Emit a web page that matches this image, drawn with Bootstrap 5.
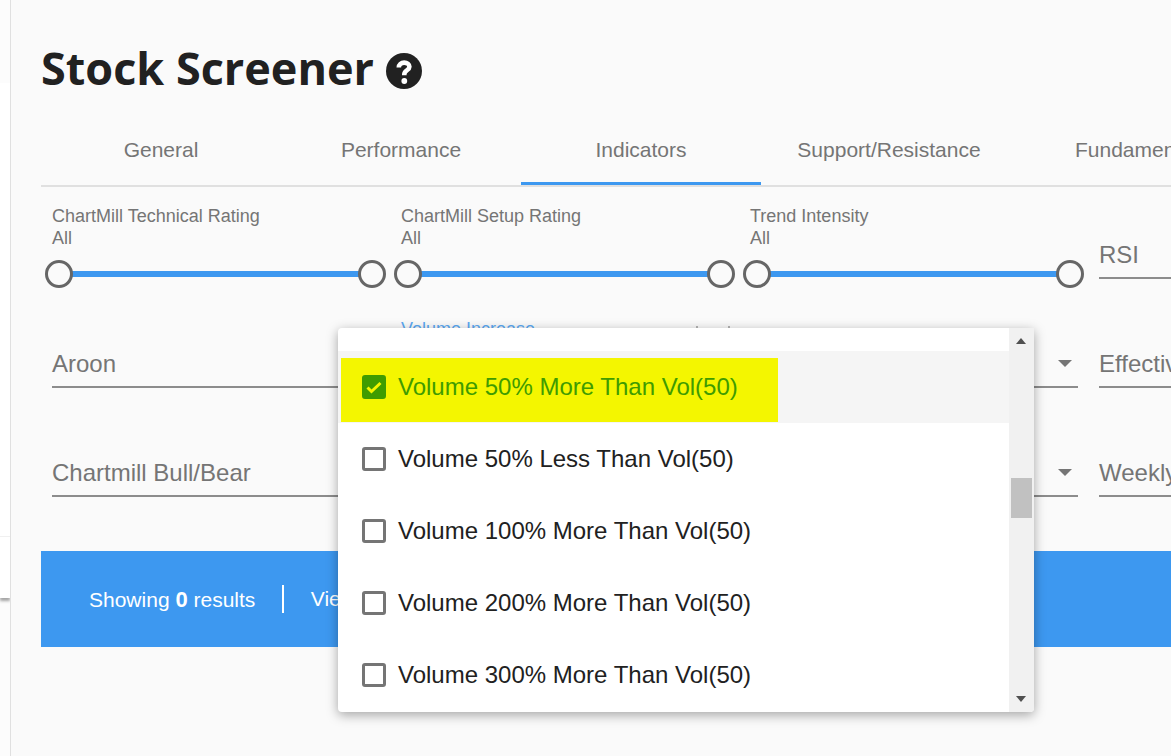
<!DOCTYPE html>
<html><head><meta charset="utf-8">
<link href="https://cdn.jsdelivr.net/npm/bootstrap@5.3.0/dist/css/bootstrap.min.css" rel="stylesheet">
<style>
html,body{height:756px;overflow:hidden;background:#fff;font-family:"Liberation Sans",Arial,sans-serif}
.shell{width:1171px;height:756px;position:relative;overflow:hidden}
.sidestrip{width:10px;flex:none;padding-top:83px;background:#fcfcfc}
.sidecard{height:453px;background:#fff}
.sidecard2{height:62px;background:#fff;border-top:1px solid #f0f0f0;box-shadow:0 3px 3px rgba(0,0,0,.35)}
.mainp{flex:none;width:1400px;height:756px;background:#fafafa;border-left:1px solid #e0e0e0;padding:41px 0 0 30px}
.pagetitle{font-family:"Open Sans",sans-serif;font-weight:700;font-size:45px;line-height:54px;color:#212121;margin:0;height:54px;display:flex;align-items:center;gap:12px}
.pagetitle svg{margin-top:5px}
.tabstrip{margin-top:24px;height:68px;width:1360px;border-bottom:2px solid #e0e0e0;display:flex}
.tabitem{width:240px;height:66px;flex:none;text-align:center;font-size:21px;line-height:62px;color:#757575}
.tabitem.wide{width:256px}
.tabitem.wide2{width:240px;text-align:left;padding-left:58px}
.tabitem.on{border-bottom:3px solid #3d98f0}
.filtergrid{display:grid;grid-template-columns:repeat(4,349px);width:1396px}
.slidecell{height:154px;padding:18px 11px 0 11px}
.slabel{font-size:18px;line-height:22px;color:#757575}
.track{height:6px;background:#3d98f0;margin:22px 7.500px 0 7px;position:relative}
.knob{position:absolute;width:28px;height:28px;top:-11px;border-radius:50%;background:#fafafa;border:3px solid #666}
.knob.a{left:-14px}.knob.b{right:-14px}
.selcell{height:109px;padding:0 11px}
.selcell.lastrow{height:101px}
.selbox{height:47px;border-bottom:2px solid #8c8c8c;font-size:24px;line-height:44px;color:#757575;display:flex;justify-content:space-between;align-items:center;width:328px;white-space:nowrap}
.caretd{width:0;height:0;border-left:7.5px solid transparent;border-right:7.5px solid transparent;border-top:7.5px solid #757575;margin-right:6px}
.rsiwrap{padding-top:45px;height:154px}
.resultbar{height:96px;width:1360px;background:#3d98f0;color:#fff;font-size:21px;display:flex;align-items:center;padding-left:48px}
.resultbar b{font-size:22px}
.vsep{width:2.5px;height:28px;background:#fff;margin:0 26.5px}
.dropmenu{position:absolute;left:338px;top:328px;width:696px;height:384px;background:#fff;border-radius:4px 0 4px 4px;box-shadow:0 3px 12px rgba(0,0,0,.35);overflow:hidden;display:flex}
.optlist{width:671px;padding-top:23px}
.optrow{height:72px;display:flex;align-items:center;padding-left:24px;gap:12px;font-size:24px;color:#212121;position:relative;white-space:nowrap}
.optrow.hov{background:#f5f5f5}
.hilite{position:absolute;left:3px;top:7px;width:437px;height:64px;background:#f4f600}
.cbx{width:24px;height:24px;border:3px solid #757575;border-radius:3px;flex:none;position:relative;display:block}
.cbx.tick{background:#3f9c00;border-color:#3f9c00}
.txt{position:relative}
.optrow.hov .txt{color:#3f9c00}
.sbar{width:25px;background:#f1f1f1;position:relative}
.sthumb{position:absolute;left:2px;top:150px;width:21px;height:40px;background:#c1c1c1}
.arr{position:absolute;left:7px;width:0;height:0;border-left:5.5px solid transparent;border-right:5.5px solid transparent}
.arr.u{top:10px;border-bottom:6px solid #505050}
.arr.d{bottom:10px;border-top:6px solid #505050}
.behind{position:absolute;left:401px;top:318px;font-size:18px;color:#5aa8f2;line-height:22px}
.tipmark{position:absolute;top:326px;width:2px;height:2px;background:#b5b5b5}
.tipa{left:696px}.tipb{left:728px}
</style></head>
<body>
<div class="shell d-flex">
  <div class="sidestrip"><div class="sidecard"></div><div class="sidecard2"></div></div>
  <main class="mainp">
    <h1 class="pagetitle">Stock Screener
      <svg width="36" height="36" viewBox="0 0 36 36" aria-hidden="true"><circle cx="18" cy="18" r="18" fill="#212121"/><path d="M12.800 14.600C12.800 11.400 15.200 9.600 18.200 9.600c3 0 5.200 1.700 5.200 4.200 0 3.500-5.100 3.500-5.100 7.500v1" fill="none" stroke="#fff" stroke-width="4.600"/><circle cx="18.300" cy="28" r="2.900" fill="#fff"/></svg>
    </h1>
    <div class="tabstrip">
      <div class="tabitem">General</div>
      <div class="tabitem">Performance</div>
      <div class="tabitem on">Indicators</div>
      <div class="tabitem wide">Support/Resistance</div>
      <div class="tabitem wide2">Fundamentals</div>
    </div>
    <div class="filtergrid">
      <div class="slidecell"><div class="slabel">ChartMill Technical Rating</div><div class="slabel">All</div><div class="track"><span class="knob a"></span><span class="knob b"></span></div></div>
      <div class="slidecell"><div class="slabel">ChartMill Setup Rating</div><div class="slabel">All</div><div class="track"><span class="knob a"></span><span class="knob b"></span></div></div>
      <div class="slidecell"><div class="slabel">Trend Intensity</div><div class="slabel">All</div><div class="track"><span class="knob a"></span><span class="knob b"></span></div></div>
      <div class="selcell rsiwrap"><div class="selbox">RSI</div></div>
      <div class="selcell"><div class="selbox">Aroon</div></div>
      <div class="selcell"><div class="selbox"></div></div>
      <div class="selcell"><div class="selbox"><span></span><span class="caretd"></span></div></div>
      <div class="selcell"><div class="selbox">Effective Volatility</div></div>
      <div class="selcell lastrow"><div class="selbox">Chartmill Bull/Bear</div></div>
      <div class="selcell lastrow"><div class="selbox"></div></div>
      <div class="selcell lastrow"><div class="selbox"><span></span><span class="caretd"></span></div></div>
      <div class="selcell lastrow"><div class="selbox">Weekly</div></div>
    </div>
    <div class="resultbar"><span>Showing <b>0</b> results</span><span class="vsep"></span><span>View</span></div>
  </main>
  <div class="behind">Volume Increase</div>
  <span class="tipmark tipa"></span><span class="tipmark tipb"></span>
  <div class="dropmenu">
    <div class="optlist">
      <div class="optrow hov"><span class="hilite"></span><span class="cbx tick"><svg width="18" height="18" viewBox="0 0 18 18" class="d-block"><path d="M2.500 9.500l4 4 9-8.500" fill="none" stroke="#f4f600" stroke-width="3"/></svg></span><span class="txt">Volume 50% More Than Vol(50)</span></div>
      <div class="optrow"><span class="cbx"></span><span class="txt">Volume 50% Less Than Vol(50)</span></div>
      <div class="optrow"><span class="cbx"></span><span class="txt">Volume 100% More Than Vol(50)</span></div>
      <div class="optrow"><span class="cbx"></span><span class="txt">Volume 200% More Than Vol(50)</span></div>
      <div class="optrow"><span class="cbx"></span><span class="txt">Volume 300% More Than Vol(50)</span></div>
    </div>
    <div class="sbar"><span class="arr u"></span><span class="sthumb"></span><span class="arr d"></span></div>
  </div>
</div>
<script src="https://cdn.jsdelivr.net/npm/bootstrap@5.3.0/dist/js/bootstrap.bundle.min.js"></script>
</body></html>
